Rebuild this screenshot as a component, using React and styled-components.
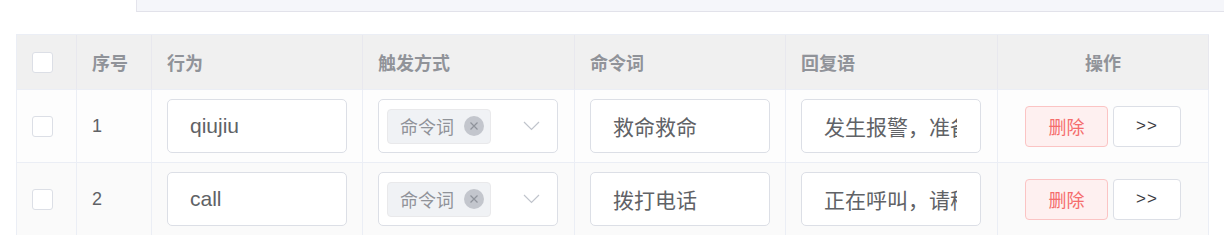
import React from 'react';
import styled, { createGlobalStyle } from 'styled-components';

const rows = [
  { id: 1, action: 'qiujiu', word: '救命救命', reply: '发生报警，准备救援，请稍候' },
  { id: 2, action: 'call', word: '拨打电话', reply: '正在呼叫，请稍候' },
];

function Chevron() {
  return (
    <svg width="17" height="10" viewBox="0 0 17 10" fill="none">
      <path d="M1 1 L8.5 8.5 L16 1" stroke="#c0c4cc" strokeWidth="1.2" />
    </svg>
  );
}

function CloseIcon() {
  return (
    <svg width="10" height="10" viewBox="0 0 10 10">
      <path d="M1.5 1.5 L8.5 8.5 M8.5 1.5 L1.5 8.5" stroke="#8f939b" strokeWidth="1.2" />
    </svg>
  );
}

function App() {
  return (
    <Page>
      <GlobalStyle />
      <TopBar />
      <Table>
        <HeadRow>
          <HeadCell><Checkbox /></HeadCell>
          <HeadCell>序号</HeadCell>
          <HeadCell>行为</HeadCell>
          <HeadCell>触发方式</HeadCell>
          <HeadCell>命令词</HeadCell>
          <HeadCell>回复语</HeadCell>
          <HeadCell $center>操作</HeadCell>
        </HeadRow>
        {rows.map((r, i) => (
          <Row key={r.id} $striped={i % 2 === 1}>
            <Cell><Checkbox /></Cell>
            <Cell><Num>{r.id}</Num></Cell>
            <Cell><Input><Value>{r.action}</Value></Input></Cell>
            <Cell>
              <Select>
                <Tag>
                  命令词
                  <TagClose><CloseIcon /></TagClose>
                </Tag>
                <Chevron />
              </Select>
            </Cell>
            <Cell><Input><Value>{r.word}</Value></Input></Cell>
            <Cell><Input><Value>{r.reply}</Value></Input></Cell>
            <Cell $center>
              <Actions>
                <DangerButton>删除</DangerButton>
                <PlainButton>&gt;&gt;</PlainButton>
              </Actions>
            </Cell>
          </Row>
        ))}
      </Table>
    </Page>
  );
}

export default App;

const GlobalStyle = createGlobalStyle`
    * { box-sizing: border-box; }
    body {
        margin: 0;
        background: #fff;
        font-family: "Liberation Sans", "Noto Sans CJK SC", sans-serif;
    }
`;
const Page = styled.div`
    width: 1224px;
    height: 235px;
    overflow: hidden;
`;
const TopBar = styled.div`
    margin-left: 136px;
    height: 12px;
    background: #f5f6fa;
    border-left: 1px solid #e4e4ec;
    border-bottom: 1px solid #e2e2ea;
`;
const Table = styled.div`
    margin: 22px 0 0 16px;
    width: 1193px;
    border-left: 1px solid #ebeef5;
    border-top: 1px solid #ebeef5;
`;
const cols = '60px 75px 211px 212px 211px 212px 211px';
const HeadRow = styled.div`
    display: grid;
    grid-template-columns: ${cols};
    height: 55px;
    background: #f0f0f0;
`;
const HeadCell = styled.div`
    display: flex;
    align-items: center;
    justify-content: ${(p) => (p.$center ? 'center' : 'flex-start')};
    padding-left: ${(p) => (p.$center ? '0' : '15px')};
    border-right: 1px solid #e8e8ee;
    border-bottom: 1px solid #ebeef5;
    font-size: 18px;
    font-weight: bold;
    color: #909399;
`;
const Row = styled.div`
    display: grid;
    grid-template-columns: ${cols};
    height: 73px;
    background: ${(p) => (p.$striped ? '#fafafa' : '#fdfdfd')};
`;
const Cell = styled.div`
    display: flex;
    align-items: center;
    justify-content: ${(p) => (p.$center ? 'center' : 'flex-start')};
    padding-left: ${(p) => (p.$center ? '0' : '15px')};
    border-right: 1px solid #ebeef5;
    border-bottom: 1px solid #ebeef5;
`;
const Checkbox = styled.span`
    display: block;
    width: 21px;
    height: 21px;
    background: #fff;
    border: 1px solid #dcdfe6;
    border-radius: 3px;
`;
const Num = styled.span`
    font-size: 18px;
    color: #606266;
`;
const Input = styled.div`
    width: 180px;
    height: 54px;
    display: flex;
    align-items: center;
    padding: 0 23px 0 22px;
    background: #fff;
    border: 1px solid #dcdfe6;
    border-radius: 5px;
    font-size: 21px;
    color: #606266;
`;
const Value = styled.span`
    flex: 1;
    min-width: 0;
    white-space: nowrap;
    overflow: hidden;
`;
const Select = styled(Input)`
    justify-content: space-between;
    padding: 0 17px 0 8px;
`;
const Tag = styled.span`
    display: flex;
    align-items: center;
    gap: 10px;
    height: 35px;
    padding: 0 6px 0 12px;
    background: #f0f2f5;
    border: 1px solid #e9e9eb;
    border-radius: 4px;
    font-size: 18px;
    color: #909399;
`;
const TagClose = styled.span`
    display: flex;
    align-items: center;
    justify-content: center;
    width: 20px;
    height: 20px;
    border-radius: 50%;
    background: #c3c6cd;
`;
const Actions = styled.div`
    display: flex;
    gap: 5px;
`;
const DangerButton = styled.button`
    width: 83px;
    height: 41px;
    padding: 0;
    border: 1px solid #fbc4c4;
    border-radius: 4px;
    background: #fef0f0;
    color: #f56c6c;
    font-family: inherit;
    font-size: 18px;
`;
const PlainButton = styled(DangerButton)`
    width: 68px;
    border-color: #dcdfe6;
    background: #fff;
    color: #3a3c40;
    font-size: 17px;
    letter-spacing: 1px;
`;
